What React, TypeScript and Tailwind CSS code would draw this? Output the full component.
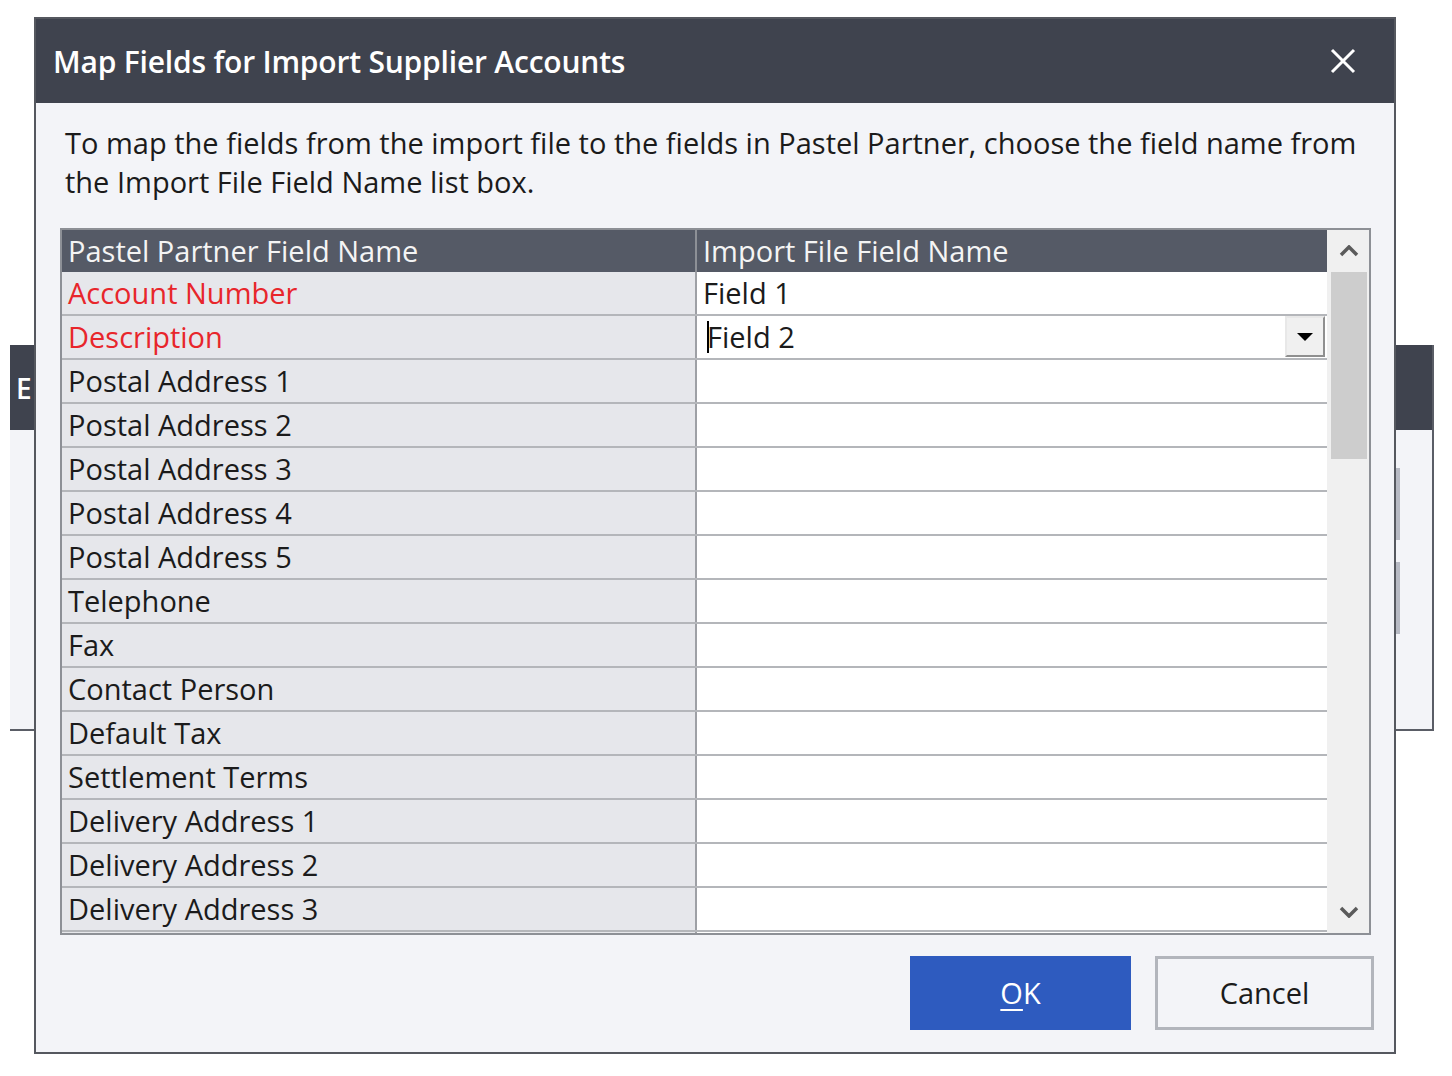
import React from "react";

const rows: { name: string; red?: boolean; value?: string; combo?: boolean }[] = [
  { name: "Account Number", red: true, value: "Field 1" },
  { name: "Description", red: true, value: "Field 2", combo: true },
  { name: "Postal Address 1" },
  { name: "Postal Address 2" },
  { name: "Postal Address 3" },
  { name: "Postal Address 4" },
  { name: "Postal Address 5" },
  { name: "Telephone" },
  { name: "Fax" },
  { name: "Contact Person" },
  { name: "Default Tax" },
  { name: "Settlement Terms" },
  { name: "Delivery Address 1" },
  { name: "Delivery Address 2" },
  { name: "Delivery Address 3" },
  { name: "" },
];

export default function App() {
  return (
    <div
      className="relative w-[1452px] h-[1076px] bg-white overflow-hidden text-[#1b1b1b]"
      style={{ fontFamily: '"Open Sans", "Noto Sans", sans-serif' }}
    >
      {/* background window */}
      <div className="absolute left-[10px] top-[345px] w-[1424px] h-[386px] border-r-2 border-b-2 border-[#5a5d66] bg-[#f3f4f8] flex flex-col">
        <div className="h-[85px] bg-[#3f434e] flex items-center pl-[6px] text-white text-[28px] font-semibold">E</div>
        <div className="flex-1 relative">
          <div className="absolute right-[32px] top-[38px] w-[6px] h-[72px] bg-[#b7bac4]" />
          <div className="absolute right-[32px] top-[132px] w-[6px] h-[72px] bg-[#b7bac4]" />
        </div>
      </div>

      {/* dialog */}
      <div className="absolute left-[34px] top-[17px] w-[1362px] h-[1037px] border-2 border-[#55585f] bg-[#f3f4f8] flex flex-col">
        <div className="h-[84px] bg-[#3f434e] flex items-center justify-between pl-[17px] pr-[38px] shrink-0">
          <span className="text-white text-[30px] font-semibold tracking-[-0.2px]">Map Fields for Import Supplier Accounts</span>
          <svg width="26" height="26" viewBox="0 0 26 26">
            <path d="M2 2 L24 24 M24 2 L2 24" stroke="white" strokeWidth="3" />
          </svg>
        </div>
        <div className="flex flex-col pl-[24px] pr-[22px] pt-[20px]">
          <p className="text-[29px] leading-[39px] pl-[5px]">
            To map the fields from the import file to the fields in Pastel Partner, choose the field name from
            <br />
            the Import File Field Name list box.
          </p>

          <div className="mt-[27px] w-[1311px] h-[707px] border-2 border-[#8d9096] flex bg-white">
            <div className="flex-1 flex flex-col overflow-hidden">
              <div className="h-[42px] shrink-0 bg-[#555a66] flex text-[#f4f4f4] text-[29px] leading-[38px]">
                <div className="w-[633px] pl-[6px] flex items-center">Pastel Partner Field Name</div>
                <div className="w-[2px] bg-[#8d9096]" />
                <div className="flex-1 pl-[6px] flex items-center">Import File Field Name</div>
              </div>
              <div className="flex-1 flex flex-col overflow-hidden">
                {rows.map((r, i) => (
                  <div key={i} className="h-[44px] shrink-0 flex border-b-2 border-[#b4b6ba]">
                    <div
                      className={`w-[633px] bg-[#e6e7eb] pl-[6px] flex items-center text-[29px] leading-[38px] ${
                        r.red ? "text-[#e8262b]" : "text-[#1b1b1b]"
                      }`}
                    >
                      {r.name}
                    </div>
                    <div className="w-[2px] bg-[#9ea0a5]" />
                    <div className="flex-1 bg-white flex items-center text-[29px] leading-[38px] relative">
                      {r.combo ? (
                        <div className="flex-1 h-full flex items-center pl-[10px] relative">
                          <span className="absolute left-[10px] top-[5px] w-[2px] h-[32px] bg-black" />
                          <span>{r.value}</span>
                          <div className="absolute right-[2px] top-[0px] w-[40px] h-[41px] bg-[#f0f0f0] border-t-2 border-l-2 border-t-[#e8e8e8] border-l-[#e8e8e8] border-r-2 border-b-2 border-r-[#8f8f8f] border-b-[#8f8f8f] flex items-center justify-center">
                            <svg width="18" height="10" viewBox="0 0 18 10">
                              <path d="M1 1 L17 1 L9 9 Z" fill="black" />
                            </svg>
                          </div>
                        </div>
                      ) : (
                        <span className="pl-[6px]">{r.value ?? ""}</span>
                      )}
                    </div>
                  </div>
                ))}
              </div>
            </div>
            {/* scrollbar */}
            <div className="w-[42px] shrink-0 bg-[#f0f0f0] flex flex-col items-center border-l-2 border-[#f0f0f0]">
              <div className="h-[42px] w-full flex items-center justify-center">
                <svg width="20" height="12" viewBox="0 0 20 12">
                  <path d="M2 10 L10 2 L18 10" stroke="#5b5b5b" strokeWidth="3.5" fill="none" />
                </svg>
              </div>
              <div className="w-[36px] h-[187px] bg-[#cdcdcd]" />
              <div className="flex-1" />
              <div className="h-[42px] w-full flex items-center justify-center">
                <svg width="20" height="12" viewBox="0 0 20 12">
                  <path d="M2 2 L10 10 L18 2" stroke="#5b5b5b" strokeWidth="3.5" fill="none" />
                </svg>
              </div>
            </div>
          </div>

          <div className="flex justify-end gap-[24px] mt-[21px] mr-[-2px]">
            <button className="w-[221px] h-[74px] bg-[#2e5bbf] text-white text-[29px] flex items-center justify-center">
              <span><span className="underline underline-offset-[5px] decoration-2">O</span>K</span>
            </button>
            <button className="w-[219px] h-[74px] bg-[#f3f4f8] border-[3px] border-[#b2b5bc] text-[29px] text-[#1b1b1b] flex items-center justify-center">
              Cancel
            </button>
          </div>
        </div>
      </div>
    </div>
  );
}
